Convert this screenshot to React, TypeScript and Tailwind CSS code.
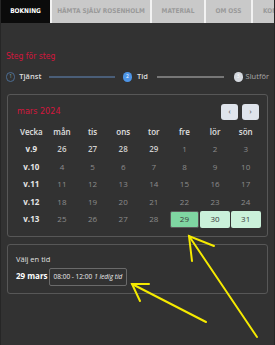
import React from "react";

const narrow = { fontFamily: "'DejaVu Sans Condensed', 'Liberation Sans Narrow', 'DejaVu Sans', sans-serif" };

const tabs = [
  { label: "BOKNING", w: "w-[49px]", active: true },
  { label: "HÄMTA SJÄLV ROSENHOLM", w: "w-[98px]" },
  { label: "MATERIAL", w: "w-[52px]" },
  { label: "OM OSS", w: "w-[45px]" },
  { label: "KON", w: "flex-1" },
];

const weeks: { week: string; days: { n: number; dim?: boolean; pick?: "on" | "open" }[] }[] = [
  { week: "v.9", days: [{ n: 26 }, { n: 27 }, { n: 28 }, { n: 29 }, { n: 1, dim: true }, { n: 2, dim: true }, { n: 3, dim: true }] },
  { week: "v.10", days: [4, 5, 6, 7, 8, 9, 10].map((n) => ({ n, dim: true })) },
  { week: "v.11", days: [11, 12, 13, 14, 15, 16, 17].map((n) => ({ n, dim: true })) },
  { week: "v.12", days: [18, 19, 20, 21, 22, 23, 24].map((n) => ({ n, dim: true })) },
  {
    week: "v.13",
    days: [
      { n: 25, dim: true },
      { n: 26, dim: true },
      { n: 27, dim: true },
      { n: 28, dim: true },
      { n: 29, pick: "on" },
      { n: 30, pick: "open" },
      { n: 31, pick: "open" },
    ],
  },
];

const head = ["Vecka", "mån", "tis", "ons", "tor", "fre", "lör", "sön"];

function Arrows() {
  return (
    <svg className="absolute inset-0 pointer-events-none" width="275" height="345" viewBox="0 0 275 345">
      <g stroke="#f5ea00" strokeWidth="2" fill="none" strokeLinecap="round">
        <line x1="256" y1="337" x2="188" y2="236" />
        <polyline points="213,246 188,236 191,261" />
        <line x1="205" y1="322" x2="131" y2="284" />
        <polyline points="148,284 131,284 139,301" />
      </g>
    </svg>
  );
}

export default function App() {
  return (
    <div
      className="relative w-[275px] h-[345px] overflow-hidden bg-[#323232] border-x border-[#262626]"
      style={{ fontFamily: "'Open Sans', 'DejaVu Sans', sans-serif" }}
    >
      <nav className="flex h-[23px] gap-[2px] bg-[#f2f2f2]" style={narrow}>
        {tabs.map((t) => (
          <div
            key={t.label}
            className={`${t.w} flex items-center overflow-hidden whitespace-nowrap text-[6.5px] ${
              t.label === "KON" ? "justify-start pl-[10px]" : "justify-center"
            } ${t.active ? "bg-[#0b0b0b] text-white font-bold" : "bg-[#c9c9c9] text-[#9a9a9a] font-semibold"}`}
          >
            {t.label}
          </div>
        ))}
      </nav>

      <div className="px-[5px]">
        <div className="mt-[27px] text-[8.5px] leading-[12px] text-[#d3163d]" style={narrow}>
          Steg för steg
        </div>

        <div className="mt-[9px] flex items-center h-[12px] text-[7.5px] text-[#dcdcdc]">
          <span className="w-[10px] h-[10px] rounded-full border border-[#4c6d93] flex items-center justify-center text-[5px] text-[#8aa]">1</span>
          <span className="ml-[4px] font-semibold">Tjänst</span>
          <span className="ml-[8px] w-[72px] h-[2px] bg-[#4a5e78]" />
          <span className="ml-[8px] w-[10px] h-[10px] rounded-full bg-[#4d94e6] flex items-center justify-center text-[5px] text-white">2</span>
          <span className="ml-[5px] font-semibold">Tid</span>
          <span className="ml-[9px] w-[73px] h-[2px] bg-[#777]" />
          <span className="ml-[10px] w-[10px] h-[10px] rounded-full bg-[#d4d8de] flex items-center justify-center text-[5px] text-white">3</span>
          <span className="ml-[3px] text-[#aaa]">Slutför</span>
        </div>

        <section className="mt-[11px] mx-[1px] border border-[#575757] rounded-[3px] pl-[8px] pr-[8px] pt-[8px] pb-[8px]">
          <div className="flex items-center justify-between h-[17px] pl-[1px]">
            <span className="text-[9px] text-[#d3163d]" style={narrow}>
              mars 2024
            </span>
            <div className="flex gap-[4px]">
              <button className="w-[17px] h-[16px] rounded-[3px] bg-[#dfe4ec] text-[#333] text-[7px] leading-none">‹</button>
              <button className="w-[17px] h-[16px] rounded-[3px] bg-[#dfe4ec] text-[#333] text-[7px] leading-none">›</button>
            </div>
          </div>

          <div className="mt-[3px] w-[245px] grid grid-cols-8 auto-rows-[17.5px] text-[8px]">
            {head.map((h) => (
              <div key={h} className="flex items-center justify-center text-[#e0e0e0] font-semibold">
                {h}
              </div>
            ))}
            {weeks.map((w) => (
              <React.Fragment key={w.week}>
                <div className="flex items-center justify-center font-bold text-[#e6e6e6]">{w.week}</div>
                {w.days.map((d, i) =>
                  d.pick ? (
                    <div key={i} className="flex items-center justify-center px-[0.5px] py-[0.25px]">
                      <span
                        className={`w-full h-full flex items-center justify-center rounded-[2px] text-[#3a3a3a] ${
                          d.pick === "on" ? "bg-[#7fd6a2] border border-[#5a5a5a]" : "bg-[#caf1da]"
                        }`}
                      >
                        {d.n}
                      </span>
                    </div>
                  ) : (
                    <div
                      key={i}
                      className={`flex items-center justify-center ${d.dim ? "text-[#8c8c8c]" : "text-[#d0d0d0] font-semibold"}`}
                    >
                      {d.n}
                    </div>
                  )
                )}
              </React.Fragment>
            ))}
          </div>
        </section>

        <section className="mt-[7px] mx-[1px] h-[50px] border border-[#575757] rounded-[3px] pl-[8px] pt-[9px]">
          <div className="text-[7.5px] leading-[10px] text-[#e0e0e0]">Välj en tid</div>
          <div className="mt-[5px] flex items-start">
            <span className="text-[8px] leading-[13px] font-bold text-white">29 mars</span>
            <span className="ml-[1px] mt-[-1px] h-[18px] px-[4px] flex items-center gap-[2px] border border-[#6a6a6a] rounded-[2px] text-[6.5px] text-[#eee] whitespace-nowrap">
              08:00 - 12:00 <i>1 ledig tid</i>
            </span>
          </div>
        </section>
      </div>

      <Arrows />
    </div>
  );
}
